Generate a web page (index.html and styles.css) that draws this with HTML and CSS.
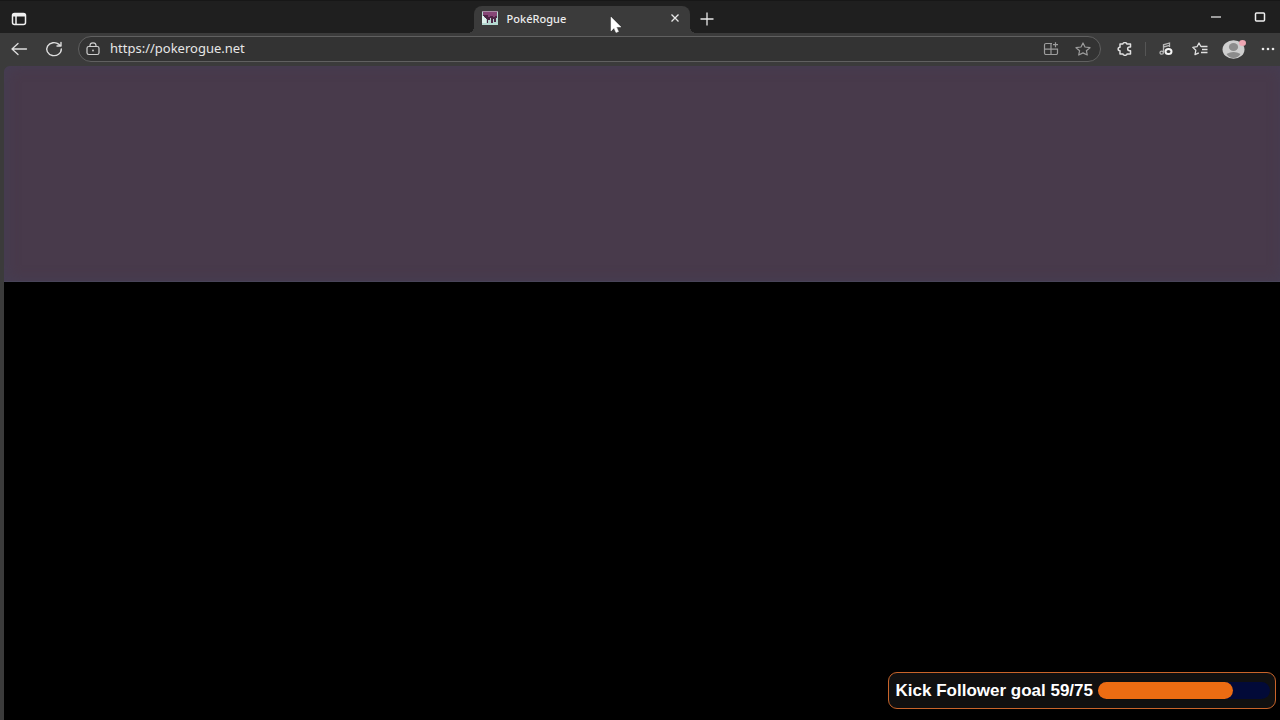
FILE: index.html
```html
<!DOCTYPE html>
<html lang="en">
<head>
    <meta charset="UTF-8">
    <title>PokéRogue</title>
    <link rel="stylesheet" href="styles.css">
</head>
<body>
    <div class="browser">
        <!-- Tab strip -->
        <header class="tab-strip">
            <div class="tab-actions">
                <button type="button" class="icon-button" aria-label="Tab actions">
                    <svg width="16" height="14" viewBox="0 0 16 14" fill="none" stroke="#f0f0f0" stroke-width="1.5">
                        <rect x="1.5" y="1.5" width="13" height="11" rx="2"/>
                        <path d="M2 3h12" stroke-width="3"/>
                        <path d="M5 3v9.5"/>
                    </svg>
                </button>
            </div>
            <div class="tab">
                <svg class="favicon" width="16" height="14" viewBox="0 0 16 14">
                    <rect width="16" height="14" fill="#b4d8d0"/>
                    <path d="M1 1h14v6h-1v4h-2V8h-1v4H9V7H8v2H6v3H5V8H3V6H1z" fill="#4e2645"/>
                    <path d="M1 1h14v4h-2v1h-2V5H8v1H6V4H1z" fill="#864676"/>
                    <path d="M0 0h16v1H0z" fill="#a58aa2"/>
                    <path d="M0 5h2v2h2v5H0z" fill="#e0f2ed"/>
                </svg>
                <span class="tab-title">PokéRogue</span>
                <button type="button" class="tab-close" aria-label="Close tab">
                    <svg width="10" height="10" viewBox="0 0 10 10" stroke="#e8e8e8" stroke-width="1.3">
                        <path d="M1.500 1.500l7 7M8.500 1.500l-7 7"/>
                    </svg>
                </button>
                <svg class="cursor" width="12" height="18" viewBox="0 0 12 18">
                    <path d="M1 1v14l3-3 2 4.500 2.500-1-2-4.500H11z" fill="#fff" stroke="#eee" stroke-width=".5"/>
                </svg>
            </div>
            <button type="button" class="new-tab" aria-label="New tab">
                <svg width="14" height="14" viewBox="0 0 14 14" stroke="#e8e8e8" stroke-width="1.3">
                    <path d="M7 .5v13M.5 7h13"/>
                </svg>
            </button>
            <div class="window-buttons">
                <button type="button" aria-label="Minimize">
                    <svg width="12" height="12" viewBox="0 0 12 12" stroke="#f0f0f0" stroke-width="1.2"><path d="M1 6h10"/></svg>
                </button>
                <button type="button" aria-label="Maximize">
                    <svg width="12" height="12" viewBox="0 0 12 12" fill="none" stroke="#f0f0f0" stroke-width="1.5"><rect x="1.5" y="2" width="9" height="8" rx="1"/></svg>
                </button>
            </div>
        </header>

        <!-- Toolbar -->
        <nav class="toolbar">
            <div class="nav-buttons">
                <button type="button" class="icon-button" aria-label="Back">
                    <svg width="18" height="14" viewBox="0 0 18 14" fill="none" stroke="#dedede" stroke-width="1.3" stroke-linecap="round" stroke-linejoin="round">
                        <path d="M16.500 7H2M8 1.500L2 7l6 5.500"/>
                    </svg>
                </button>
                <button type="button" class="icon-button" aria-label="Refresh">
                    <svg width="18" height="16" viewBox="0 0 18 16" fill="none" stroke="#dedede" stroke-width="1.4" stroke-linecap="round" stroke-linejoin="round">
                        <path d="M16.300 8A7.300 6.500 0 1 1 14 3.400L15.800 5M16 1.500V5h-4"/>
                    </svg>
                </button>
            </div>
            <div class="address-bar">
                <svg width="14" height="14" viewBox="0 0 14 14" fill="none" stroke="#cfcfcf" stroke-width="1.2">
                    <rect x="1" y="4.5" width="12" height="8" rx="1.8"/>
                    <path d="M4 4.500V3.600a3 2.800 0 0 1 6 0v.9"/>
                    <circle cx="7" cy="8.500" r=".9" fill="#cfcfcf" stroke="none"/>
                </svg>
                <input type="text" class="address" aria-label="Address" value="https://pokerogue.net">
                <button type="button" class="icon-button" aria-label="Install app">
                    <svg width="16" height="14" viewBox="0 0 16 14" fill="none" stroke="#9c9c9c" stroke-width="1.2">
                        <path d="M9 1.500H3a1.500 1.500 0 0 0-1.500 1.500v8A1.500 1.500 0 0 0 3 12.500h10a1.500 1.500 0 0 0 1.500-1.500V7.200h-13M8 1.500v11M12.500.2v5M10 2.700h5"/>
                    </svg>
                </button>
                <button type="button" class="icon-button" aria-label="Add to favorites">
                    <svg width="16" height="14" viewBox="0 0 16 14" fill="none" stroke="#9c9c9c" stroke-width="1.2" stroke-linejoin="round">
                        <path d="M8 1l2 4 5 .7-3.600 3 .9 4.300L8 10.900 3.700 13l.9-4.300L1 5.700 6 5z"/>
                    </svg>
                </button>
            </div>
            <button type="button" class="icon-button" aria-label="Extensions">
                <svg width="16" height="14" viewBox="0 0 16 14" fill="none" stroke="#e0e0e0" stroke-width="1.5" stroke-linejoin="round">
                    <path d="M3 2h2.800a2 1.400 0 0 1 4 0H13.500v3h-1a1.700 1.700 0 0 0 0 3.700h1V12H10a2 1.300 0 0 1-4 0H3V8.700a1.800 1.700 0 0 1 0-3.500z"/>
                </svg>
            </button>
            <span class="separator"></span>
            <div class="tools">
                <button type="button" class="icon-button" aria-label="Media control">
                    <svg width="14" height="14" viewBox="0 0 14 14" fill="none" stroke="#b8b8b8" stroke-width="1.3">
                        <path d="M4.500 10.500V2.800L10.500 1v4M4.500 5l6-1.700"/>
                        <ellipse cx="2.700" cy="10.700" rx="1.700" ry="1.500"/>
                        <ellipse cx="9.500" cy="9.500" rx="3" ry="2.500" stroke="#f4f4f4" stroke-width="2"/>
                    </svg>
                </button>
                <button type="button" class="icon-button" aria-label="Favorites">
                    <svg width="16" height="14" viewBox="0 0 16 14" fill="none" stroke="#e0e0e0" stroke-width="1.3" stroke-linejoin="round">
                        <path d="M9 4.700L7 1 5 4.700.8 5.400 3.800 8.300 3 12.700 6.800 10.800M9 4.500h6.500M10 7.500h5.500M9 10.500h6.500"/>
                    </svg>
                </button>
                <button type="button" class="icon-button" aria-label="Profile">
                    <svg width="24" height="22" viewBox="0 0 24 22">
                        <ellipse cx="11.500" cy="11.500" rx="11" ry="9.300" fill="#cecece"/>
                        <ellipse cx="11.500" cy="9" rx="4.600" ry="4" fill="#8c8c8c"/>
                        <path d="M4.500 16q7-4 14 0-2.500 4-7 4t-7-4z" fill="#8c8c8c"/>
                        <ellipse cx="20.500" cy="5" rx="3.500" ry="3" fill="#eda6b2"/>
                    </svg>
                </button>
                <button type="button" class="icon-button" aria-label="Settings and more">
                    <svg width="14" height="4" viewBox="0 0 14 4" fill="#e8e8e8">
                        <circle cx="2" cy="2" r="1.3"/><circle cx="7" cy="2" r="1.3"/><circle cx="12" cy="2" r="1.3"/>
                    </svg>
                </button>
            </div>
        </nav>

        <!-- Page content -->
        <main class="page">
            <div class="game"></div>
        </main>
    </div>

    <!-- Stream overlay -->
    <div class="goal">
        <label for="followers">Kick Follower goal 59/75</label>
        <progress id="followers" value="59" max="75"></progress>
    </div>
</body>
</html>
```

FILE: styles.css
```css
* {
    box-sizing: border-box;
}
body {
    margin: 0;
    background: #000;
    font-family: "Noto Sans", "Open Sans", sans-serif;
}
button {
    display: flex;
    align-items: center;
    justify-content: center;
    padding: 0;
    background: none;
    border: none;
}
.browser {
    display: flex;
    flex-direction: column;
    height: 100vh;
    overflow: hidden;
    background: #3b3b3b;
}
.icon-button {
    flex: none;
    width: 24px;
    height: 24px;
}

/* Tab strip */
.tab-strip {
    display: grid;
    grid-template-columns: 37% 216px 34px 1fr;
    flex: none;
    height: 33px;
    background: #1f1f1f;
    border-top: 1px solid #171717;
}
.tab-actions {
    display: flex;
    align-items: center;
    padding: 3px 7px 0;
}
.tab {
    position: relative;
    display: flex;
    align-items: center;
    gap: 9px;
    margin-top: 5px;
    padding: 0 10px 3px 8px;
    background: #3b3b3b;
    border-radius: 8px 8px 0 0;
}
/* Curved feet of the active tab */
.tab::before,
.tab::after {
    content: "";
    position: absolute;
    bottom: 0;
    width: 6px;
    height: 6px;
}
.tab::before {
    right: 100%;
    background: radial-gradient(circle at 0 0, transparent 6px, #3b3b3b 6px);
}
.tab::after {
    left: 100%;
    background: radial-gradient(circle at 100% 0, transparent 6px, #3b3b3b 6px);
}
.tab-title {
    flex: 1;
    color: #ececec;
    font-size: 11px;
    font-weight: 500;
}
.cursor {
    position: absolute;
    top: 10px;
    left: 136px;
}
.new-tab {
    padding-top: 3px;
}
.window-buttons {
    display: flex;
    justify-content: flex-end;
    gap: 4px;
}
.window-buttons button {
    width: 40px;
}

/* Toolbar */
.toolbar {
    display: flex;
    align-items: center;
    gap: 8px;
    flex: none;
    height: 33px;
    padding-bottom: 1px;
}
.nav-buttons {
    display: flex;
    gap: 11px;
    padding-left: 7px;
}
.address-bar {
    display: flex;
    align-items: center;
    gap: 8px;
    flex: 1;
    height: 26px;
    margin: 0 4px;
    padding: 0 5px 0 7px;
    background: #333;
    border: 1px solid #606060;
    border-radius: 13px;
}
.address {
    flex: 1;
    min-width: 0;
    padding: 0 2px 2px;
    background: none;
    border: none;
    outline: none;
    color: #e6e6e6;
    font-family: inherit;
    font-size: 13px;
}
.separator {
    width: 1px;
    height: 14px;
    background: #555;
}
.tools {
    display: flex;
    gap: 10px;
}

/* Page */
.page {
    flex: 1;
    margin-left: 4px;
    background: linear-gradient(transparent 20px, #000 20px);
}
.game {
    height: 30vh;
    background: #483a4b;
    border-bottom: 1px solid #484458;
    border-radius: 6px 0 0 0;
    box-shadow: inset 2px 0 14px #453e54;
}

/* Follower goal */
.goal {
    position: absolute;
    right: 4px;
    bottom: 11px;
    display: flex;
    align-items: center;
    gap: 5px;
    height: 37px;
    padding: 0 5px 0 7px;
    background: #101010;
    border: 1px solid #c8642a;
    border-radius: 9px;
    color: #fff;
    font-family: "Liberation Sans", Arial, sans-serif;
    font-size: 17px;
    font-weight: bold;
}
progress {
    width: 172px;
    height: 17px;
    appearance: none;
    border: none;
}
progress::-webkit-progress-bar {
    background: #020a38;
    border-radius: 9px;
}
progress::-webkit-progress-value {
    background: #ec6c12;
    border-radius: 9px;
}
```
